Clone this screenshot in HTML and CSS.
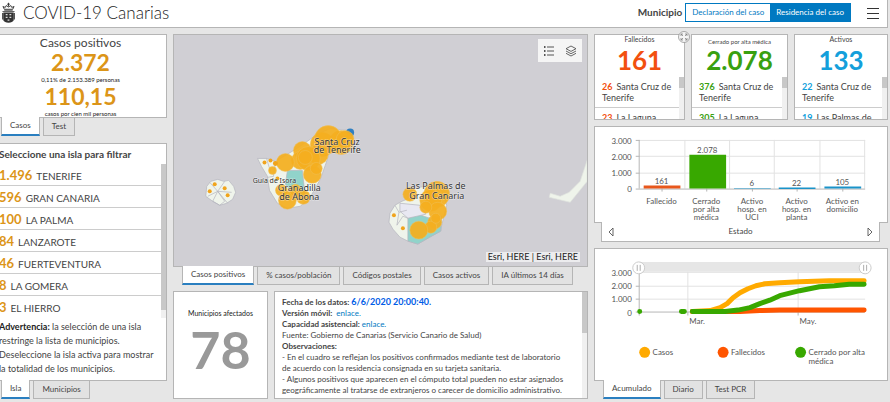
FILE: index.html
```html
<!DOCTYPE html>
<html lang="es">
<head>
<meta charset="utf-8">
<meta name="viewport" content="width=device-width, initial-scale=1">
<title>COVID-19 Canarias</title>
<link rel="stylesheet" href="styles.css">
</head>
<body>
<header class="header">
  <svg class="crest" viewBox="0 0 14 22" aria-hidden="true">
    <path d="M2.500 7 1 4 3.500 5 4.500 3 7 4.500 9.500 3 10.500 5 13 4 11.500 7Z" fill="none" stroke="#333" stroke-width="1"/>
    <path d="M7 0v4M5.500 1.500h3" stroke="#333" fill="none"/>
    <path d="M2.500 8h9M.5 9.500h13" stroke="#444" fill="none"/>
    <path d="M1.500 10.500h11v8.500q-1 2-5.500 2.500-4.500-.5-5.500-2.500Z" fill="#333"/>
    <path d="M0 11h2v7H0zM12 11h2v7h-2z" fill="#555"/>
    <path d="M4 12h2v1.500H4zM8 12h2v1.500H8zM4 15h2v1.500H4zM8 15h2v1.500H8zM6 18h2v1.300H6z" fill="#ddd"/>
  </svg>
  <h1 class="title">COVID-19 Canarias</h1>
  <span class="filter-label" id="mun">Municipio</span>
  <div class="switch" role="group" aria-labelledby="mun">
    <button class="switch-btn">Declaración del caso</button>
    <button class="switch-btn on">Residencia del caso</button>
  </div>
  <button class="menu" aria-label="Menú"><svg viewBox="0 0 12 12"><path d="M0 1.500h12M0 6.500h12M0 11.500h12" stroke="#333"/></svg></button>
</header>

<main class="board">
  <div class="col left">
    <section class="panel total">
      <h2 class="total-title">Casos positivos</h2>
      <strong class="total-num">2.372</strong>
      <span class="total-note">0,11% de 2.153.389 personas</span>
      <strong class="total-num">110,15</strong>
      <span class="total-note">casos por cien mil personas</span>
    </section>
    <nav class="tabs first"><button class="tab on">Casos</button><button class="tab">Test</button></nav>
    <section class="panel islands">
      <h2 class="islands-title">Seleccione una isla para filtrar</h2>
      <div class="scroller">
        <ul class="island-list">
          <li><b>1.496</b>TENERIFE</li>
          <li><b>596</b>GRAN CANARIA</li>
          <li><b>100</b>LA PALMA</li>
          <li><b>84</b>LANZAROTE</li>
          <li><b>46</b>FUERTEVENTURA</li>
          <li><b>8</b>LA GOMERA</li>
          <li><b>3</b>EL HIERRO</li>
        </ul>
        <div class="track"><div class="thumb long"></div></div>
      </div>
      <p class="warning"><b>Advertencia:</b> la selección de una isla<br>restringe la lista de municipios.<br>Deseleccione la isla activa para mostrar<br>la totalidad de los municipios.</p>
    </section>
    <nav class="tabs"><button class="tab on">Isla</button><button class="tab">Municipios</button></nav>
  </div>

  <div class="col middle">
    <section class="panel map">
      <svg class="map-art" viewBox="173 34 415 232" preserveAspectRatio="xMidYMid slice" role="img" aria-label="Mapa de casos">
        <g stroke="#b4b4be" stroke-width=".7">
          <path d="M206 186 210 181 217 179 223 181 228 180 233 186 235 192 232 199 226 203 219 205 212 201 205 196Z" fill="#eff4eb"/>
          <path d="M209 182l8 9-10 5M224 181l-7 10 14 1M217 191l-5 10 7 4 5-4-7-10M217 191l10 12" fill="none"/>
          <path d="M257 158 266 158 275 161 290 152 301 145 318 133 330 128 350 130 345 138 330 150 325 165 320 179 311 195 300 206 287 208 277 203 269 190 267 176 261 166Z" fill="#eff4eb"/>
          <path d="M287 170 302 170 304 188 305 196 295 196 285 184Z" fill="#91d3ca"/>
          <path d="M266 158l4 13M275 161l-2 15-6 1" fill="none"/>
          <path d="M395 205 402 201 407 199 414 188 430 185 442 190 447 205 442 225 441 231 430 237 418 244 408 241 400 237 393 229 389 222 390 213Z" fill="#eff4eb"/>
          <path d="M408 218 418 214 430 218 442 216 441 231 430 237 418 244 408 241Z" fill="#91d3ca"/>
          <path d="M400 203l20 2 6 9-18 4-8-7Z" fill="#e8e8f2"/>
          <path d="M395 205l4 7-2 13 6-9 5 2M399 212l8-2" fill="none"/>
          <path d="M588 160 588 181 580 191 571 202 550 197 551 193 561 196 570 192 581 181Z" fill="#eff4eb" stroke="#dfe3de"/>
        </g>
        <circle cx="350" cy="132" r="4" fill="#2f7fc1"/>
        <g fill="#f4ae1f" fill-opacity=".93" stroke="#efc05c" stroke-width=".5">
          <circle cx="322" cy="144" r="12"/><circle cx="341" cy="142" r="12"/><circle cx="328" cy="139" r="14"/><circle cx="345" cy="139" r="9"/><circle cx="318" cy="154" r="10"/>
          <circle cx="302" cy="150" r="9"/><circle cx="300" cy="160" r="9"/>
          <circle cx="308" cy="158" r="12"/><circle cx="305" cy="157" r="7"/><circle cx="285" cy="162" r="9"/><circle cx="312" cy="174" r="9"/><circle cx="316" cy="168" r="6"/>
          <circle cx="272" cy="170" r="4"/><circle cx="281" cy="190" r="6"/><circle cx="287" cy="200" r="9"/><circle cx="303" cy="197" r="7"/>
          <circle cx="295" cy="190" r="6"/>
          <circle cx="410" cy="194" r="7"/><circle cx="437" cy="194" r="13"/><circle cx="431" cy="200" r="11"/><circle cx="438" cy="211" r="9"/>
          <circle cx="426" cy="207" r="6"/><circle cx="435" cy="222" r="7"/><circle cx="431" cy="227" r="6"/><circle cx="436" cy="218" r="5"/><circle cx="419" cy="230" r="9"/>
        </g>
        <g fill="#f0a41c">
          <circle cx="214" cy="184" r="2"/><circle cx="209" cy="191" r="2"/><circle cx="224" cy="188" r="2"/><circle cx="227" cy="195" r="2"/>
          <circle cx="264" cy="162" r="2"/><circle cx="270" cy="160" r="2"/><circle cx="275" cy="163" r="2.500"/><circle cx="277" cy="178" r="2"/>
          <circle cx="394" cy="215" r="2"/><circle cx="403" cy="228" r="2"/>
        </g>
        <g class="place" text-anchor="middle">
          <text x="337" y="144">Santa Cruz</text><text x="337" y="153">de Tenerife</text>
          <text x="299" y="191">Granadilla</text><text x="299" y="200">de Abona</text>
          <text x="436" y="189">Las Palmas de</text><text x="437" y="199">Gran Canaria</text>
          <text class="small" x="274" y="183">Guía de Isora</text>
        </g>
      </svg>
      <div class="map-tools">
        <button aria-label="Leyenda"><svg viewBox="0 0 12 12"><path d="M4 2h7M4 6h7M4 10h7" stroke="#555"/><path d="M1 1h1.500v2H1zM1 5h1.500v2H1zM1 9h1.500v2H1z" fill="#555"/></svg></button>
        <button aria-label="Capas"><svg viewBox="0 0 12 12"><path d="M6 1 11 3.700 6 6.400 1 3.700ZM1 6l5 2.700L11 6M1 8.300 6 11l5-2.700" fill="none" stroke="#555" stroke-width=".9"/></svg></button>
      </div>
      <span class="credit">Esri, HERE | Esri, HERE</span>
    </section>
    <nav class="tabs inset"><button class="tab on">Casos positivos</button><button class="tab">% casos/población</button><button class="tab">Códigos postales</button><button class="tab">Casos activos</button><button class="tab">IA últimos 14 días</button></nav>
    <div class="bottom">
      <section class="panel affected">
        <h2>Municipios afectados</h2>
        <strong>78</strong>
      </section>
      <section class="panel notes">
        <div class="notes-text">
          <p><b>Fecha de los datos: <em>6/6/2020 20:00:40.</em></b></p>
          <p><b>Versión móvil:</b>&nbsp; <a href="#">enlace.</a></p>
          <p><b>Capacidad asistencial:</b> <a href="#">enlace.</a></p>
          <p>Fuente: Gobierno de Canarias (Servicio Canario de Salud)</p>
          <p><b>Observaciones:</b></p>
          <p>- En el cuadro se reflejan los positivos confirmados mediante test de laboratorio<br>de acuerdo con la residencia consignada en su tarjeta sanitaria.</p>
          <p>- Algunos positivos que aparecen en el cómputo total pueden no estar asignados<br>geográficamente al tratarse de extranjeros o carecer de domicilio administrativo.</p>
        </div>
        <div class="track"><div class="thumb mid"></div></div>
      </section>
    </div>
  </div>

  <div class="col right">
    <div class="cards">
      <section class="panel card red">
        <h2>Fallecidos</h2><strong>161</strong>
        <div class="scroller"><ul><li><b>26</b>Santa Cruz de Tenerife</li><li><b>23</b>La Laguna</li></ul><div class="track"><div class="thumb"></div></div></div>
        <button class="expand" aria-label="Expandir"><svg viewBox="0 0 12 12"><circle cx="6" cy="6" r="5.500" fill="#f4f4f4" stroke="#888" stroke-width=".7"/><path d="M3 5V3h2M7 3h2v2M9 7v2H7M5 9H3V7M3 3l2 2M9 3 7 5M9 9 7 7M3 9l2-2" fill="none" stroke="#777" stroke-width=".7"/></svg></button>
      </section>
      <section class="panel card green">
        <h2 class="fine">Cerrado por alta médica</h2><strong>2.078</strong>
        <div class="scroller"><ul><li><b>376</b>Santa Cruz de Tenerife</li><li><b>305</b>La Laguna</li></ul><div class="track"><div class="thumb"></div></div></div>
      </section>
      <section class="panel card blue">
        <h2>Activos</h2><strong>133</strong>
        <div class="scroller"><ul><li><b>22</b>Santa Cruz de Tenerife</li><li><b>19</b>Las Palmas de Gran Canaria</li></ul><div class="track"><div class="thumb"></div></div></div>
      </section>
    </div>

    <section class="panel bars">
      <svg class="chart" viewBox="594 127 294 96" role="img" aria-label="Casos por estado">
        <path d="M639 140.500h227M639 156.500h227M639 173.500h227M684.500 140v49M729.500 140v49M774.500 140v49M820.500 140v49M865.500 140v49" stroke="#e2e2e2"/>
        <path d="M635 140.500h4M635 156.500h4M635 173.500h4M635 189.500h231M638.500 140v49M661.500 189v3M706.500 189v3M752.500 189v3M797.500 189v3M843.500 189v3" stroke="#b5b5b5"/>
        <g text-anchor="end"><text x="631" y="144">3.000</text><text x="631" y="160">2.000</text><text x="631" y="176">1.000</text><text x="631" y="192">0</text></g>
        <path d="M643 186h37v3h-37z" fill="#e8571c"/>
        <path d="M689 155h37v34h-37z" fill="#38a800"/>
        <path d="M734 188.500h37v.5h-37zM779 188h37v1.500h-37zM825 187h37v2h-37z" fill="#1a93c9"/>
        <g text-anchor="middle">
          <text x="661" y="184">161</text><text x="707" y="153">2.078</text><text x="752" y="186">6</text><text x="797" y="186">22</text><text x="843" y="185">105</text>
          <text x="661" y="205">Fallecido</text>
          <text x="706" y="205">Cerrado</text><text x="706" y="213">por alta</text><text x="706" y="221">médica</text>
          <text x="752" y="205">Activo</text><text x="752" y="213">hosp. en</text><text x="752" y="221">UCI</text>
          <text x="797" y="205">Activo</text><text x="797" y="213">hosp. en</text><text x="797" y="221">planta</text>
          <text x="843" y="205">Activo en</text><text x="843" y="213">domicilio</text>
        </g>
      </svg>
    </section>
    <div class="pager">
      <button aria-label="Anterior"><svg viewBox="0 0 6 10"><path d="M5 1v8L1 5Z" fill="none" stroke="#555" stroke-width=".9"/></svg></button>
      <span>Estado</span>
      <button aria-label="Siguiente"><svg viewBox="0 0 6 10"><path d="M1 1v8l4-4Z" fill="none" stroke="#555" stroke-width=".9"/></svg></button>
    </div>

    <section class="panel lines">
      <svg class="chart" viewBox="594 249 294 131" role="img" aria-label="Evolución acumulada">
        <path d="M639 262h226v10H639z" fill="#e6e6e6"/>
        <path d="M639 272.500h227M639 286.500h227M639 299.500h227M687.500 272v40M798.500 272v40" stroke="#e2e2e2"/>
        <path d="M635 272.500h4M635 286.500h4M635 299.500h4M635 312.500h231M638.500 272v44M687.500 312v4M798.500 312v4" stroke="#b5b5b5"/>
        <g text-anchor="end"><text x="631" y="276">3.000</text><text x="631" y="289">2.000</text><text x="631" y="302">1.000</text><text x="631" y="316">0</text></g>
        <text x="689" y="325">Mar.</text><text x="800" y="325">May.</text>
        <g fill="none" stroke-width="5" stroke-linecap="round" stroke-linejoin="round">
          <path d="M692 312 710 311 720 308 727 304 733 298 740 293 748 289 756 286 765 284 780 283 800 282 830 281 865 281" stroke="#ffaa00"/>
          <path d="M692 312 740 312 760 311 780 310.500 865 310.500" stroke="#ff5500"/>
          <path d="M639 312h.01M681 312h3M692 312 725 312 738 310.500 750 308 760 304 770 300.500 780 296 790 293.500 800 291 810 289 820 287 835 286 850 284.500 865 284.500" stroke="#38a800"/>
        </g>
        <g fill="#fff" stroke="#ccc"><circle cx="638" cy="268" r="6"/><circle cx="866" cy="268" r="6"/></g>
        <path d="M636.500 265v6M639.500 265v6M864.500 265v6M867.500 265v6" stroke="#999" stroke-width=".8"/>
        <circle cx="644" cy="353" r="5.500" fill="#ffaa00"/><circle cx="723" cy="353" r="5.500" fill="#ff5500"/><circle cx="801" cy="353" r="5.500" fill="#38a800"/>
        <text x="652" y="356">Casos</text><text x="731" y="356">Fallecidos</text><text x="809" y="356">Cerrado por alta</text><text x="809" y="365">médica</text>
      </svg>
    </section>
    <nav class="tabs inset"><button class="tab on">Acumulado</button><button class="tab">Diario</button><button class="tab">Test PCR</button></nav>
  </div>
</main>
</body>
</html>
```
FILE: styles.css
```css
* { box-sizing: border-box; }

body {
  margin: 0;
  min-height: 100vh;
  display: flex;
  flex-direction: column;
  overflow: hidden;
  background: #e6e6e6;
  color: #444;
  font: 10px/11px Lato, "Open Sans", sans-serif;
}

h1, h2, p, ul { margin: 0; padding: 0; font-weight: 400; }
ul { list-style: none; }
button { font: inherit; color: inherit; margin: 0; padding: 0; border: 0; background: none; }
svg { display: block; }
a { color: #0079c1; text-decoration: none; }

.header {
  height: 28px;
  display: flex;
  align-items: center;
  margin-right: 2px;
  padding: 0 8px 2px 2px;
  background: #fff;
  border-bottom: 1px solid #b5b5b5;
  border-right: 1px solid #b5b5b5;
}
.crest { width: 13px; height: 22px; }
.title { flex: 1; margin-left: 8px; font-size: 17px; font-weight: 300; line-height: 24px; color: #222; }
.filter-label { margin-right: 3px; font-size: 10px; font-weight: 700; }
.switch { display: flex; border: 1px solid #0079c1; }
.switch-btn { height: 17px; padding: 0 6px; font-size: 8px; color: #0079c1; }
.switch-btn.on { background: #0079c1; color: #fff; }
.menu { width: 12px; margin-left: 16px; }

.board {
  flex: 1;
  display: grid;
  grid-template-columns: 173fr 415fr 294fr;
  gap: 6px;
  margin-left: -6px;
  padding: 6px 2px 3px 0;
}
.col { display: flex; flex-direction: column; min-width: 0; }
.panel { position: relative; background: #fff; border: 1px solid #b5b5b5; }

.tabs { display: flex; gap: 3px; height: 18px; padding-left: 7px; flex: none; }
.tabs.inset { padding-left: 9px; }
.tabs.first { margin-bottom: 7px; }
.tab {
  padding: 0 8px;
  font-size: 8px;
  white-space: nowrap;
  background: #e2e2e2;
  border: 1px solid #b5b5b5;
  border-top: 0;
}
.tab.on {
  position: relative;
  margin-top: -1px;
  background: #fff;
  border-bottom: 2px solid #2a7fc0;
}

.total { height: 84px; padding: 1px 10px 0; overflow: hidden; text-align: center; }
.total-title { font-size: 12px; line-height: 14px; }
.total-num { display: block; font-size: 23px; line-height: 25px; color: #dc9518; }
.total-note { display: block; font-size: 6px; line-height: 9px; color: #222; }

.islands { flex: 1; padding-left: 4px; }
.islands-title { font-size: 10px; line-height: 20px; font-weight: 700; }
.scroller { display: flex; }
.scroller ul { flex: 1; min-width: 0; }
.island-list li { height: 22px; line-height: 22px; font-size: 10px; border-bottom: 1px solid #ccc; }
.island-list li:last-child { border-bottom: 0; }
.island-list b { margin-right: 4px; font-size: 13px; color: #dc9518; }
.track { width: 5px; background: #f0f0f0; }
.thumb { height: 11px; background: #c8c8c8; }
.thumb.long { height: 95%; }
.thumb.mid { height: 41px; }
.warning { margin-top: 2px; font-size: 9px; line-height: 14px; white-space: nowrap; }
.warning b { color: #222; }

.map { height: 233px; background: #d0cfd4; overflow: hidden; }
.map-art { width: 100%; height: 100%; }
.place { font: 9px "Noto Sans", sans-serif; fill: #333; stroke: #fff; stroke-opacity: .5; stroke-width: 1; paint-order: stroke; }
.place .small { font-size: 7px; }
.map-tools { position: absolute; top: 4px; right: 5px; display: flex; background: #f5f5f5; }
.map-tools button { width: 22px; height: 23px; padding: 5px; }
.credit { position: absolute; right: 7px; bottom: 4px; padding: 0 2px; line-height: 10px; font-size: 9px; color: #222; background: #ececee; }

.bottom { flex: 1; display: grid; grid-template-columns: 95fr 314fr; gap: 6px; margin-top: 6px; }
.affected { text-align: center; padding-top: 16px; }
.affected h2 { font-size: 7px; line-height: 11px; color: #222; }
.affected strong { display: block; margin-top: 8px; font-size: 52px; line-height: 44px; color: #999; }
.notes { display: flex; }
.notes-text { flex: 1; padding: 5px 0 0 7px; font-size: 8px; line-height: 11px; white-space: nowrap; }
.notes em { font-style: normal; font-size: 9px; line-height: 10px; color: #005ce6; }

.cards { display: grid; grid-template-columns: 91fr 97fr 94fr; gap: 6px; }
.card { height: 86px; display: flex; flex-direction: column; text-align: center; }
.card h2 { font-size: 7px; line-height: 9px; }
.card .fine { font-size: 6px; line-height: 13px; margin-bottom: -4px; }
.card strong { margin-top: 2px; font-size: 26px; line-height: 28px; }
.card .scroller { flex: 1; margin-top: 3px; overflow: hidden; text-align: left; }
.card li { padding: 4px 2px 4px 7px; font-size: 9px; line-height: 11px; border-bottom: 1px solid #ccc; }
.card b { margin-right: 4px; }
.red strong, .red b { color: #f2500f; }
.green strong, .green b { color: #38a010; }
.blue strong, .blue b { color: #149fdb; }
.expand { position: absolute; top: -4px; right: -6px; width: 12px; }

.chart { width: 100%; height: auto; font-size: 8px; fill: #555; }
.bars { margin-top: 6px; }
.pager {
  position: relative;
  display: flex;
  align-items: center;
  justify-content: space-between;
  height: 20px;
  margin: -1px 8px 0 7px;
  padding: 0 6px;
  font-size: 8px;
  background: #fff;
  border: 1px solid #b5b5b5;
  border-top: 0;
}
.pager svg { width: 6px; }
.lines { margin-top: 6px; flex: 1; }
```
